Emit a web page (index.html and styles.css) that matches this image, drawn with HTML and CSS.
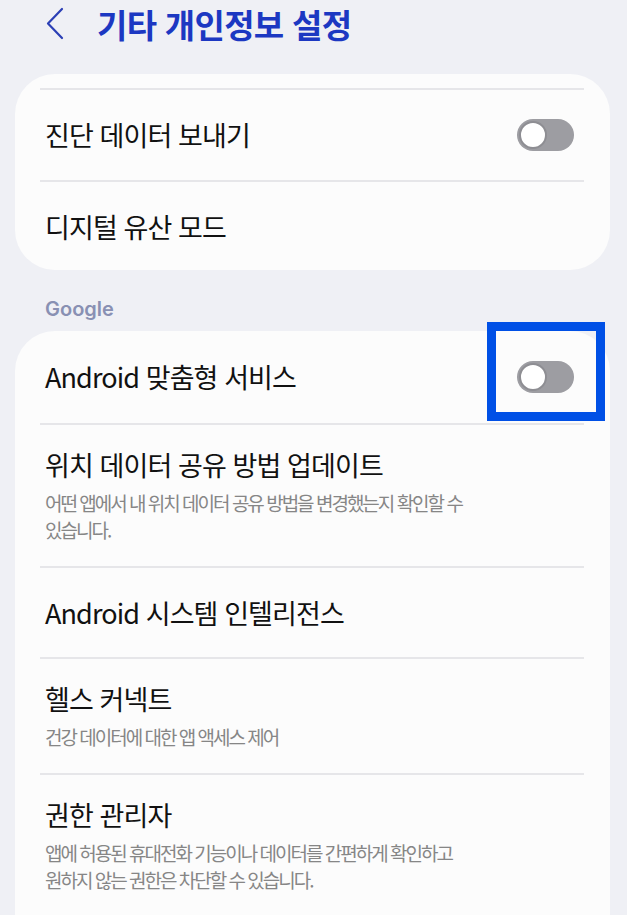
FILE: index.html
```html
<!DOCTYPE html>
<html lang="ko">
<head>
    <meta charset="UTF-8">
    <meta name="viewport" content="width=device-width, initial-scale=1.0">
    <title>기타 개인정보 설정</title>
    <link rel="stylesheet" href="styles.css">
</head>
<body>
    <header class="topbar">
        <svg class="back" width="20" height="34" viewBox="0 0 20 34">
            <polyline points="16,2 2,16.5 16,31" fill="none" stroke="#2b3fb5" stroke-width="2.2" stroke-linecap="round" stroke-linejoin="round"/>
        </svg>
        <h1>기타 개인정보 설정</h1>
    </header>

    <div class="card card-first">
        <div class="row toggle-row">
            <span class="title">진단 데이터 보내기</span>
            <span class="switch"></span>
        </div>
        <div class="row last">
            <span class="title">디지털 유산 모드</span>
        </div>
    </div>

    <p class="section">Google</p>

    <div class="card card-open">
        <div class="row toggle-row no-line">
            <span class="title">Android 맞춤형 서비스</span>
            <span class="switch"></span>
            <span class="highlight"></span>
        </div>
        <div class="row tall">
            <div>
                <div class="title">위치 데이터 공유 방법 업데이트</div>
                <div class="sub">어떤 앱에서 내 위치 데이터 공유 방법을 변경했는지 확인할 수<br>있습니다.</div>
            </div>
        </div>
        <div class="row">
            <span class="title">Android 시스템 인텔리전스</span>
        </div>
        <div class="row tall">
            <div>
                <div class="title">헬스 커넥트</div>
                <div class="sub">건강 데이터에 대한 앱 액세스 제어</div>
            </div>
        </div>
        <div class="row tall">
            <div>
                <div class="title">권한 관리자</div>
                <div class="sub">앱에 허용된 휴대전화 기능이나 데이터를 간편하게 확인하고<br>원하지 않는 권한은 차단할 수 있습니다.</div>
            </div>
        </div>
    </div>
</body>
</html>
```

FILE: styles.css
```css
body {
    margin: 0;
    background-color: #eff0f5;
    font-family: "Noto Sans CJK KR", "Noto Sans", sans-serif;
    color: #111;
    overflow: hidden;
}

.topbar {
    height: 42px;
    padding-top: 3px;
    display: flex;
    align-items: center;
    padding-left: 46px;
}

.back {
    margin-right: 31px;
}

.topbar h1 {
    margin: 0;
    font-size: 33px;
    font-weight: 700;
    letter-spacing: -0.7px;
    color: #1c38c2;
    line-height: 42px;
}

.card {
    background-color: #fcfcfc;
    margin: 0 17px 0 15px;
    border-radius: 40px;
}

.card-first {
    margin-top: 29px;
    padding-top: 14px;
}

/* list keeps going below the fold */
.card-open {
    padding-bottom: 60px;
}

.row {
    position: relative;
    display: flex;
    align-items: center;
    justify-content: space-between;
    margin: 0 26px 0 25px;
    padding: 28px 10px 27px 5px;
    border-top: 2px solid #e6e6e9;
}

.row.toggle-row {
    padding-bottom: 28px;
}

.row.no-line {
    border-top: none;
    padding-top: 29px;
    padding-bottom: 29px;
}

.row.last {
    padding-bottom: 26px;
}

.row.tall {
    padding-top: 23px;
    padding-bottom: 23px;
}

.title {
    font-size: 27px;
    line-height: 34px;
    letter-spacing: -0.9px;
    color: #111;
}

.sub {
    margin-top: 7px;
    font-size: 19px;
    line-height: 27px;
    letter-spacing: -2px;
    color: #868686;
}

.switch {
    position: relative;
    width: 57px;
    height: 32px;
    border-radius: 16px;
    background-color: #9d9da2;
    flex-shrink: 0;
}

.switch::before {
    content: "";
    position: absolute;
    left: 2px;
    top: 2px;
    width: 24px;
    height: 24px;
    border-radius: 50%;
    background-color: #fff;
    border: 2px solid #8e8e93;
}

.highlight {
    position: absolute;
    right: -21px;
    top: -9px;
    width: 118px;
    height: 99px;
    border: 9px solid #0050e6;
    box-sizing: border-box;
}

.section {
    margin: 0;
    padding: 23px 0 6px 45px;
    height: 32px;
    line-height: 32px;
    font-family: "Inter", "Noto Sans", sans-serif;
    font-size: 20px;
    font-weight: 600;
    color: #8990b3;
}
```
